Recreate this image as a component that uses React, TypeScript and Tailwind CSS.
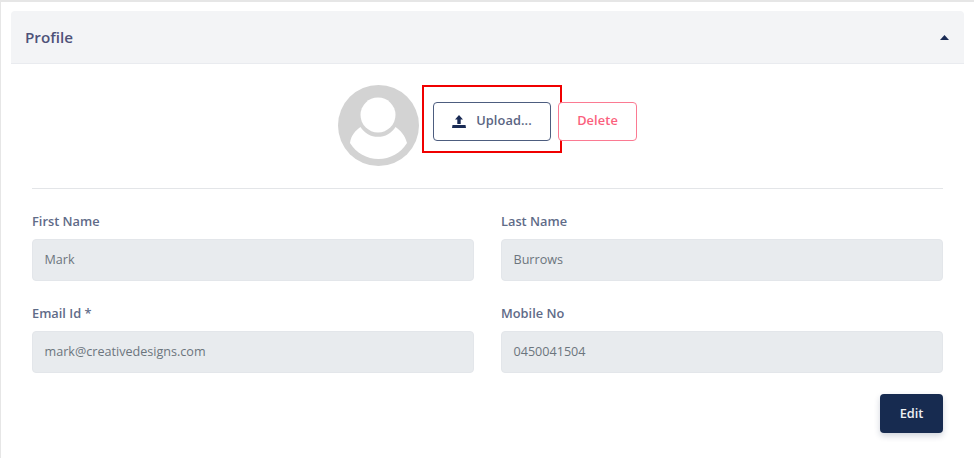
import React from "react";

function Field({ label, value }: { label: string; value: string }) {
  return (
    <div className="flex-1 min-w-0">
      <div className="h-[17px] text-[12.8px] leading-[15px] font-semibold text-[#5f6b88]">{label}</div>
      <div className="mt-[8px] h-[42px] rounded-[4px] bg-[#e8ebee] border border-[#e3e6ea] pl-[11.5px] flex items-center text-[12.6px] text-[#6c757d]">
        {value}
      </div>
    </div>
  );
}

export default function App() {
  return (
    <div className="w-[974px] h-[458px] overflow-hidden bg-white border-t-[2px] border-l-[1px] border-[#e6e6e6] pt-[9px] pl-[10px] pr-[10px] font-['Open_Sans',sans-serif]">
      <div className="h-[53px] w-[953px] rounded-t-[4px] bg-[#f3f4f6] border-b border-[#e9ebef] flex items-center justify-between pl-[14px] pr-[15px]">
        <span className="text-[15.2px] font-semibold text-[#4e5279]">Profile</span>
        <svg width="9" height="5" viewBox="0 0 9 5" className="mt-[1px]">
          <path d="M4.5 0 L9 5 L0 5 Z" fill="#1a2b55" />
        </svg>
      </div>

      <div className="w-[953px] px-[21px]">
        <div className="mt-[21px] flex items-start pl-[306px] h-[81px]">
          <svg width="81" height="81" viewBox="0 0 81 81" className="shrink-0">
            <circle cx="40.5" cy="40.5" r="40.5" fill="#d3d3d3" />
            <circle cx="40" cy="30" r="17.500" fill="#fff" />
            <path d="M12 58 C13 50 18 45 22.500 42 A 20.500 20.500 0 0 0 57.500 42 C62 45 67 50 69 58 C63 68 52 74 40.500 74 C29 74 18 68 12 58 Z" fill="#fff" />
          </svg>
          <div className="ml-[3px] w-[140px] h-[68px] border-[2px] border-[#f00000] pl-[9px] pt-[15px] shrink-0">
            <button className="w-[118px] h-[39px] pb-[2px] rounded-[4px] border border-[#4d5d7f] bg-white flex items-center justify-center gap-[10px] text-[12.8px] font-semibold text-[#5a6582]">
              <svg width="14" height="13" viewBox="0 0 14 13" className="mt-[2px]">
                <path d="M7 0 L11 4.500 L8.700 4.500 L8.700 9 L5.300 9 L5.300 4.500 L3 4.500 Z" fill="#1a2b55" />
                <path d="M0.500 10 L13.500 10 L14 13 L0 13 Z" fill="#1a2b55" />
              </svg>
              <span className="tracking-[0.1px]">Upload...</span>
            </button>
          </div>
          <button className="-ml-[4px] mt-[17px] w-[79px] h-[39px] pb-[2px] shrink-0 rounded-[4px] border border-[#fb7a92] bg-white text-[12.8px] font-semibold text-[#fb5f7d] tracking-[0.1px]">
            Delete
          </button>
        </div>

        <div className="mt-[22px] h-px bg-[#e3e5e8]" />

        <div className="mt-[25px] flex gap-[27px]">
          <Field label="First Name" value="Mark" />
          <Field label="Last Name" value="Burrows" />
        </div>
        <div className="mt-[25px] flex gap-[27px]">
          <Field label="Email Id *" value="mark@creativedesigns.com" />
          <Field label="Mobile No" value="0450041504" />
        </div>

        <div className="mt-[21px] flex justify-end">
          <button className="w-[63px] h-[39px] rounded-[4px] bg-[#172b50] text-[#eef0f3] text-[12.8px] font-semibold shadow-[0_3px_6px_rgba(23,43,80,0.2)]">
            Edit
          </button>
        </div>
      </div>
    </div>
  );
}
